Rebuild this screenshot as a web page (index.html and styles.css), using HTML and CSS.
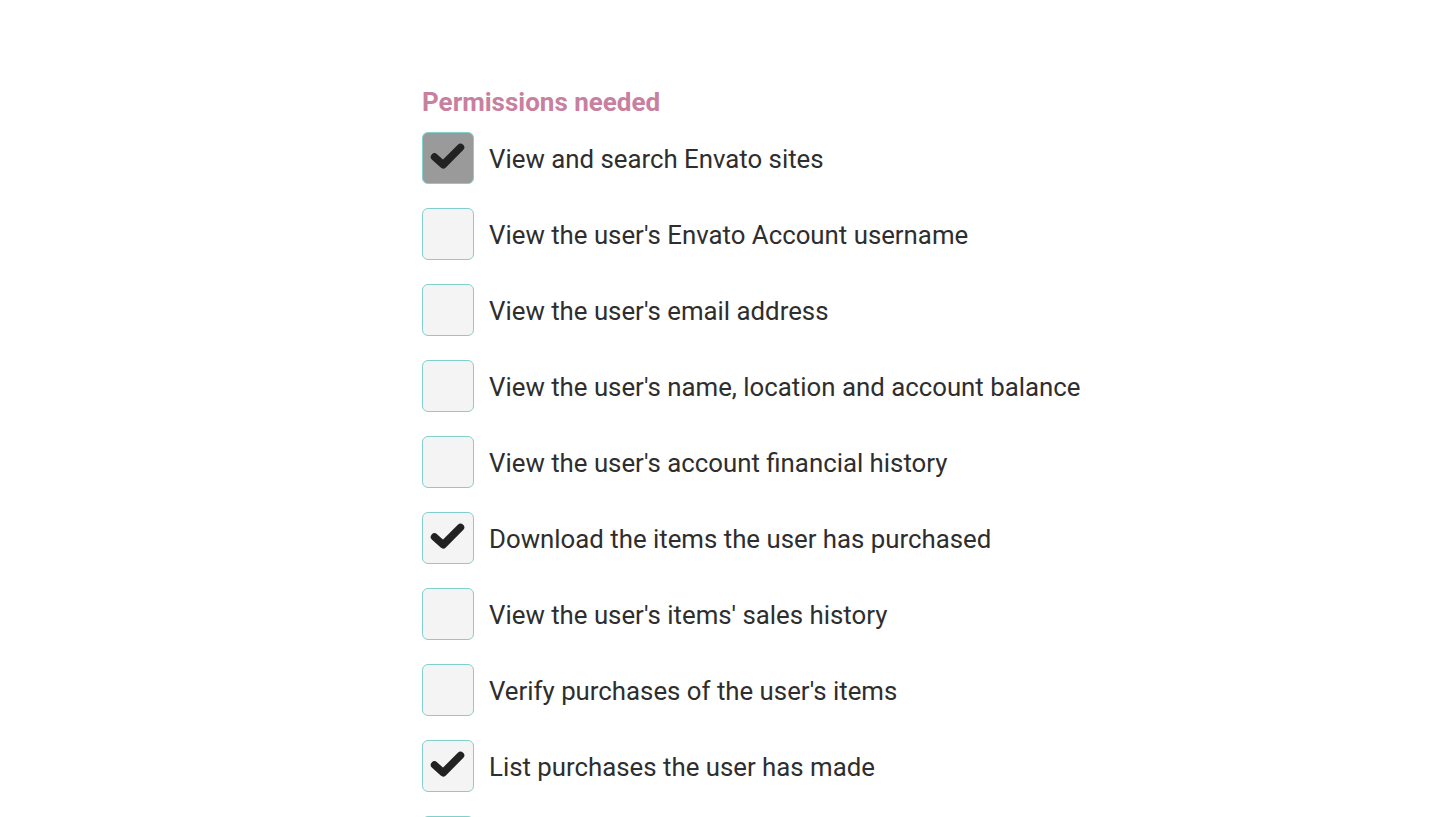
FILE: index.html
```html
<!DOCTYPE html>
<html>
<head>
<meta charset="utf-8">
<link rel="stylesheet" href="styles.css">
</head>
<body>
<main class="page">
  <h2 class="title">Permissions needed</h2>
  <ul class="perms">
    <li class="perm"><span class="box focused"><svg class="check" viewBox="0 0 52 52"><polyline points="12,25 21,33 39,15"/></svg></span><span class="label">View and search Envato sites</span></li>
    <li class="perm"><span class="box"></span><span class="label">View the user's Envato Account username</span></li>
    <li class="perm"><span class="box"></span><span class="label">View the user's email address</span></li>
    <li class="perm"><span class="box"></span><span class="label">View the user's name, location and account balance</span></li>
    <li class="perm"><span class="box"></span><span class="label">View the user's account financial history</span></li>
    <li class="perm"><span class="box"><svg class="check" viewBox="0 0 52 52"><polyline points="12,25 21,33 39,15"/></svg></span><span class="label">Download the items the user has purchased</span></li>
    <li class="perm"><span class="box"></span><span class="label">View the user's items' sales history</span></li>
    <li class="perm"><span class="box"></span><span class="label">Verify purchases of the user's items</span></li>
    <li class="perm"><span class="box"><svg class="check" viewBox="0 0 52 52"><polyline points="12,25 21,33 39,15"/></svg></span><span class="label">List purchases the user has made</span></li>
    <li class="perm"><span class="box"></span></li>
  </ul>
</main>
</body>
</html>
```

FILE: styles.css
```css
html, body {
  margin: 0;
  padding: 0;
  background: #ffffff;
}
body {
  font-family: Roboto, "Liberation Sans", sans-serif;
  color: #2e2e2e;
  height: 817px;
  overflow: hidden;
}
.page {
  padding: 86px 0 0 422px;
}
.title {
  margin: 0 0 14px 0;
  font-size: 26px;
  font-weight: 700;
  color: #c8809f;
  line-height: 32px;
}
.perms {
  list-style: none;
  margin: 0;
  padding: 0;
  display: flex;
  flex-direction: column;
  gap: 24px;
}
.perm {
  display: flex;
  align-items: center;
  gap: 15px;
  height: 52px;
}
.box {
  box-sizing: border-box;
  width: 52px;
  height: 52px;
  flex: 0 0 52px;
  border: 1px solid #82d0cb;
  border-radius: 6px;
  background: #f4f4f4;
  display: flex;
}
.box.focused {
  background: #9a9a9a;
}
.check {
  width: 50px;
  height: 50px;
}
.check polyline {
  fill: none;
  stroke: #222222;
  stroke-width: 7.8;
  stroke-linecap: round;
  stroke-linejoin: round;
}
.label {
  font-size: 25.8px;
  line-height: 30px;
  padding-top: 2px;
}
```
